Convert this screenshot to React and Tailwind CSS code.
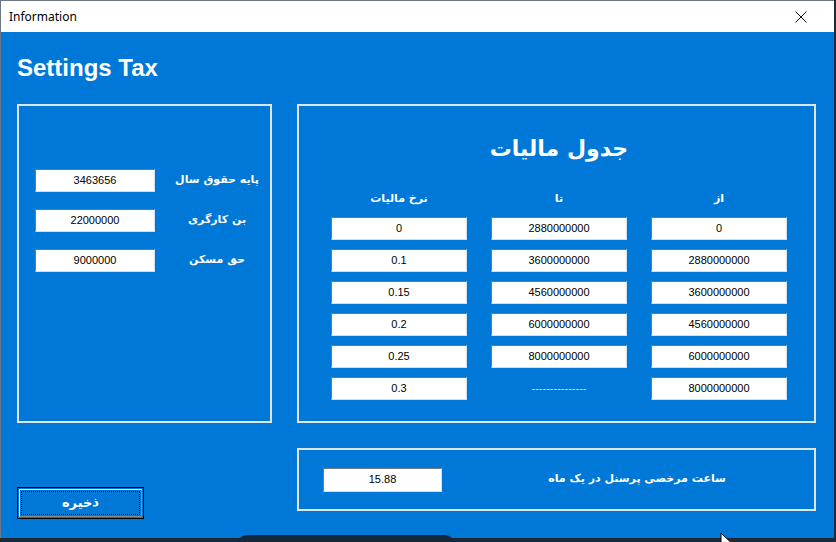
const fa = { fontFamily: '"DejaVu Sans", "Noto Sans", sans-serif' };
const num = { fontFamily: '"Liberation Sans", Arial, sans-serif' };

const taxRows = [
  { rate: "0", to: "2880000000", from: "0" },
  { rate: "0.1", to: "3600000000", from: "2880000000" },
  { rate: "0.15", to: "4560000000", from: "3600000000" },
  { rate: "0.2", to: "6000000000", from: "4560000000" },
  { rate: "0.25", to: "8000000000", from: "6000000000" },
  { rate: "0.3", to: null, from: "8000000000" },
];

const baseFields = [
  { label: "پایه حقوق سال", value: "3463656" },
  { label: "بن کارگری", value: "22000000" },
  { label: "حق مسکن", value: "9000000" },
];

function Field({ value, className = "" }) {
  return (
    <div
      className={`flex items-center justify-center bg-white text-[11px] text-black border border-t-[#6f7a84] border-l-[#6f7a84] border-r-[#d3e1ee] border-b-[#d3e1ee] ${className}`}
      style={num}
    >
      {value}
    </div>
  );
}

export default function App() {
  return (
    <div className="relative w-[836px] h-[542px] overflow-hidden bg-[#1d2935]">
      <div className="w-[834px] h-[538px] flex flex-col border-l border-t border-[#6c7886] bg-[#0078d7]">
        {/* title bar */}
        <div className="h-[31px] shrink-0 bg-white flex items-center justify-between pl-[8px] pr-[27px]">
          <span className="text-[12px] text-black" style={{ fontFamily: '"Noto Sans", "Liberation Sans", sans-serif' }}>
            Information
          </span>
          <svg width="12" height="12" viewBox="0 0 12 12">
            <path d="M0.5 0.5 L11.5 11.5 M11.5 0.5 L0.5 11.5" stroke="#111" strokeWidth="1" />
          </svg>
        </div>

        <div className="flex-1 px-[16px]">
          <h1 className="mt-[20px] h-[32px] leading-[32px] text-[24px] font-bold text-white" style={num}>
            Settings Tax
          </h1>

          <div className="mt-[20px] flex gap-[25px]">
            {/* left column */}
            <div className="w-[255px] flex flex-col">
              <div className="h-[319px] border-2 border-[#dbe6f0] pt-[63px] pl-[16px] pr-[8px] flex flex-col gap-[17px]">
                {baseFields.map((f) => (
                  <div key={f.label} className="flex items-center gap-[17px]">
                    <Field value={f.value} className="w-[120px] h-[23px]" />
                    <div dir="rtl" className="w-[90px] text-center text-[11px] font-bold text-white" style={fa}>
                      {f.label}
                    </div>
                  </div>
                ))}
              </div>
              <button className="mt-[64px] w-[127px] h-[32px] border border-black bg-[#0078d7] p-[1px]">
                <div className="w-full h-full border border-t-[#e8eef4] border-l-[#e8eef4] border-r-[#8a8a8a] border-b-[#8a8a8a] p-[1px]">
                  <div className="w-full h-full border border-dotted border-[#111] flex items-center justify-center">
                    <span dir="rtl" className="text-[13px] font-bold text-white" style={fa}>
                      ذخیره
                    </span>
                  </div>
                </div>
              </button>
            </div>

            {/* right column */}
            <div className="w-[519px] flex flex-col">
              <div className="h-[319px] border-2 border-[#dbe6f0] pl-[32px]">
                <div className="w-[456px]">
                  <div dir="rtl" className="mt-[25px] h-[36px] text-center text-[22px] font-bold text-white leading-[36px]" style={fa}>
                    جدول مالیات
                  </div>
                  <div className="mt-[24px] grid grid-cols-3 gap-x-[24px] text-[11px] font-bold text-white" style={fa}>
                    <div dir="rtl" className="text-center">نرخ مالیات</div>
                    <div dir="rtl" className="text-center">تا</div>
                    <div dir="rtl" className="text-center">از</div>
                  </div>
                  <div className="mt-[9px] grid grid-cols-3 gap-x-[24px] gap-y-[9px]">
                    {taxRows.map((r) => (
                      <div key={r.rate} className="contents">
                        <Field value={r.rate} className="h-[23px]" />
                        {r.to ? (
                          <Field value={r.to} className="h-[23px]" />
                        ) : (
                          <div className="h-[23px] flex items-center justify-center text-[11px] text-[#cfe3f5]" style={num}>
                            ---------------
                          </div>
                        )}
                        <Field value={r.from} className="h-[23px]" />
                      </div>
                    ))}
                  </div>
                </div>
              </div>

              <div className="mt-[25px] h-[63px] border-2 border-[#dbe6f0] flex items-center pl-[24px]">
                <Field value="15.88" className="w-[119px] h-[24px]" />
                <div dir="rtl" className="flex-1 ml-[18px] text-center text-[11px] font-bold text-white" style={fa}>
                  ساعت مرخصی پرسنل در یک ماه
                </div>
              </div>
            </div>
          </div>
        </div>
      </div>

      {/* dock overlay at the bottom */}
      <div className="absolute left-[237px] top-[535px] w-[218px] h-[12px] rounded-t-[10px] bg-[#14283a]" />

      {/* mouse pointer */}
      <svg className="absolute left-[720px] top-[532px]" width="12" height="18" viewBox="0 0 12 18">
        <path d="M1 1 L1 15 L4.5 11.5 L7 17 L9 16 L6.5 10.5 L11 10.5 Z" fill="#fff" stroke="#000" strokeWidth="1" />
      </svg>
    </div>
  );
}
